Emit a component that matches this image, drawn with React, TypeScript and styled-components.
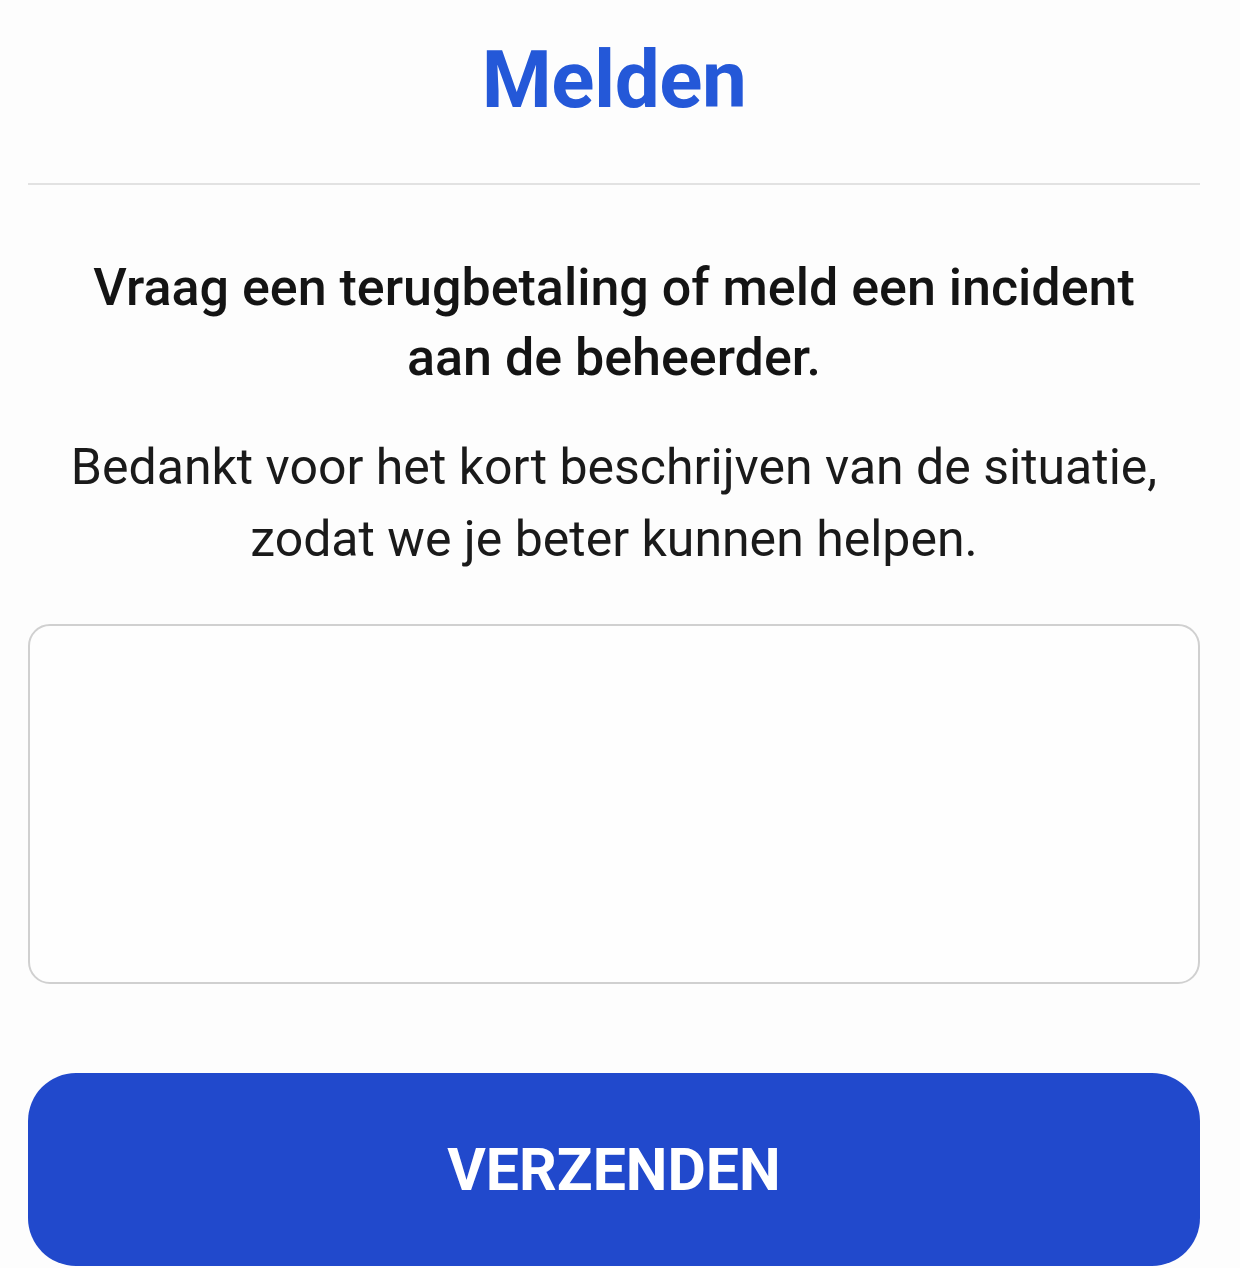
import React from "react";
import styled, { createGlobalStyle } from "styled-components";

const GlobalStyle = createGlobalStyle`
  html, body {
    margin: 0;
    padding: 0;
    background: #fdfdfd;
    font-family: Roboto, "Liberation Sans", sans-serif;
  }
`;

const Page = styled.main`
  width: 1172px;
  margin-left: 28px;
  display: flex;
  flex-direction: column;
  align-items: stretch;
`;

const Title = styled.h1`
  margin: 0;
  padding-top: 32px;
  height: 183px;
  box-sizing: border-box;
  text-align: center;
  font-size: 80px;
  font-weight: 700;
  line-height: 96px;
  color: #2458d8;
  letter-spacing: -0.5px;
`;

const Divider = styled.hr`
  margin: 0;
  border: none;
  height: 2px;
  background: #e2e2e2;
`;

const Lead = styled.h2`
  margin: 68px 0 0;
  text-align: center;
  font-size: 52px;
  font-weight: 500;
  line-height: 70px;
  color: #141414;
`;

const Intro = styled.p`
  margin: 38px 0 0;
  text-align: center;
  font-size: 50px;
  font-weight: 400;
  line-height: 72px;
  color: #1a1a1a;
`;

const MessageBox = styled.textarea`
  margin-top: 49px;
  height: 360px;
  box-sizing: border-box;
  border: 2px solid #d0d0d0;
  border-radius: 22px;
  background: #fefefe;
  resize: none;
  padding: 20px;
  font-family: inherit;
  font-size: 40px;
  outline: none;
`;

const SendButton = styled.button`
  margin-top: 89px;
  height: 193px;
  border: none;
  border-radius: 48px;
  background: #2149cc;
  color: #ffffff;
  font-family: inherit;
  font-size: 59px;
  font-weight: 700;
  cursor: pointer;
`;

export default function App() {
  return (
    <>
      <GlobalStyle />
      <Page>
        <Title>Melden</Title>
        <Divider />
        <Lead>
          Vraag een terugbetaling of meld een incident
          <br />
          aan de beheerder.
        </Lead>
        <Intro>
          Bedankt voor het kort beschrijven van de situatie,
          <br />
          zodat we je beter kunnen helpen.
        </Intro>
        <MessageBox aria-label="Beschrijving" />
        <SendButton type="button">VERZENDEN</SendButton>
      </Page>
    </>
  );
}
